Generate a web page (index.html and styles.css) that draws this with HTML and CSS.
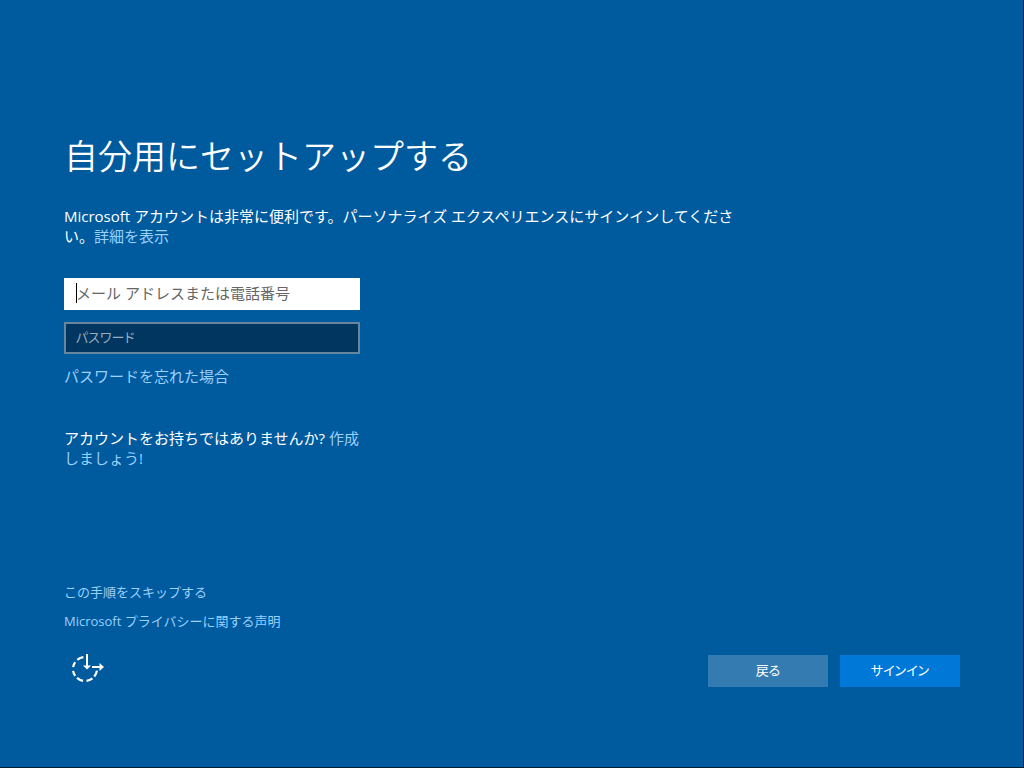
FILE: index.html
```
<!DOCTYPE html>
<html lang="ja">
<head>
    <meta charset="utf-8">
    <meta name="viewport" content="width=device-width, initial-scale=1">
    <title>自分用にセットアップする</title>
    <link rel="stylesheet" href="styles.css">
</head>
<body>
    <main class="setup">
        <h1>自分用にセットアップする</h1>
        <p class="intro">Microsoft アカウントは非常に便利です。パーソナライズ エクスペリエンスにサインインしてください。<a href="#">詳細を表示</a></p>

        <form class="login" id="login">
            <div class="field">
                <input type="text" id="account" class="text-box active" aria-label="メール アドレスまたは電話番号" placeholder="メール アドレスまたは電話番号">
                <span class="caret"></span>
            </div>
            <div class="field">
                <input type="password" id="password" class="text-box" aria-label="パスワード" placeholder="パスワード">
            </div>
            <a href="#">パスワードを忘れた場合</a>
            <p class="create">アカウントをお持ちではありませんか? <a href="#">作成しましょう!</a></p>
        </form>

        <nav class="links">
            <a href="#">この手順をスキップする</a>
            <a href="#">Microsoft プライバシーに関する声明</a>
        </nav>

        <footer class="actions">
            <button type="button" class="ease" aria-label="コンピューターの簡単操作">
                <svg width="36" height="32" viewBox="0 0 36 32" fill="none" stroke="#fff">
                    <!-- dashed dial -->
                    <path d="M13.4 2.1A12 12 0 0 0 7.3 4.8M5.2 7.1A12 12 0 0 0 3.1 12.2M3.1 15.8A12 12 0 0 0 5.2 20.9M7 22.9A12 12 0 0 0 13 25.8M16.5 25.9A12 12 0 0 0 22.5 23.4M24.3 21.6A12 12 0 0 0 26.9 15.6" stroke-width="2.2"/>
                    <!-- arrows -->
                    <path d="M17 -1V11M22 12H31" stroke-width="2"/>
                    <path d="M13 10.5H21L17 14.5ZM29.5 8V16L34 12Z" fill="#fff" stroke="none"/>
                </svg>
            </button>
            <div class="buttons">
                <button type="button" class="btn">戻る</button>
                <button type="submit" form="login" class="btn primary">サインイン</button>
            </div>
        </footer>
    </main>
</body>
</html>
```
FILE: styles.css
```
* {
    margin: 0;
    padding: 0;
    box-sizing: border-box;
}

body {
    background: #005a9e;
    color: #fff;
    font-family: "Open Sans", "Noto Sans CJK JP", sans-serif;
    font-size: 15px;
    line-height: 20px;
}

a {
    color: #99d1ff;
    text-decoration: none;
}

a:hover {
    color: #fff;
}

.setup {
    display: flex;
    flex-direction: column;
    min-height: 100vh;
    padding: 132px 63px 80px 64px;
    border-right: 1px solid #00213a;
    border-bottom: 1px solid #00213a;
}

h1 {
    font-size: 34px;
    font-weight: 350;
    line-height: 48px;
    margin-bottom: 26px;
}

.intro {
    max-width: 672px;
    margin-bottom: 32px;
}

.login {
    display: flex;
    flex-direction: column;
    gap: 12px;
    width: 296px;
}

.field {
    position: relative;
    display: flex;
}

.text-box {
    width: 100%;
    height: 32px;
    padding: 0 10px 2px;
    border: 2px solid #66869f;
    outline: none;
    background: #00365f;
    color: #fff;
    font: inherit;
}

.text-box::placeholder {
    color: #99afbf;
    opacity: 1;
}

.text-box[type="password"] {
    font-size: 13px;
    font-feature-settings: "palt";
}

.text-box.active {
    border-color: #fff;
    background: #fff;
    color: #000;
}

.text-box.active::placeholder {
    color: #666;
}

.caret {
    position: absolute;
    top: 5px;
    left: 12px;
    width: 1px;
    height: 20px;
    background: #000;
}

.create {
    margin-top: 30px;
}

.links {
    display: flex;
    flex-direction: column;
    align-items: flex-start;
    gap: 9px;
    margin-top: auto;
    margin-bottom: 24px;
    font-size: 13px;
}

.actions {
    display: flex;
    justify-content: space-between;
    align-items: center;
}

.ease {
    display: flex;
    margin-left: 6px;
    border: none;
    background: none;
    cursor: pointer;
}

.ease svg {
    overflow: visible;
}

.buttons {
    display: flex;
    gap: 12px;
}

.btn {
    width: 120px;
    height: 32px;
    padding-bottom: 2px;
    border: none;
    background: #337bb1;
    color: #fff;
    font: inherit;
    font-size: 13px;
    font-feature-settings: "palt";
    cursor: pointer;
}

.btn.primary {
    background: #0078d7;
}
```
